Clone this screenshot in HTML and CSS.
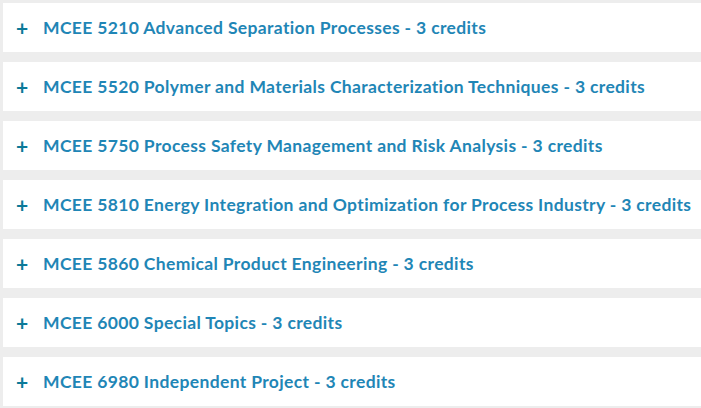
FILE: index.html
```html
<!DOCTYPE html>
<html>
<head>
<meta charset="utf-8">
<link rel="stylesheet" href="styles.css">
</head>
<body>
<div class="list">
  <div class="item"><span class="plus">+</span><span class="title">MCEE 5210 Advanced Separation Processes - 3 credits</span></div>
  <div class="item"><span class="plus">+</span><span class="title">MCEE 5520 Polymer and Materials Characterization Techniques - 3 credits</span></div>
  <div class="item"><span class="plus">+</span><span class="title">MCEE 5750 Process Safety Management and Risk Analysis - 3 credits</span></div>
  <div class="item"><span class="plus">+</span><span class="title">MCEE 5810 Energy Integration and Optimization for Process Industry - 3 credits</span></div>
  <div class="item"><span class="plus">+</span><span class="title">MCEE 5860 Chemical Product Engineering - 3 credits</span></div>
  <div class="item"><span class="plus">+</span><span class="title">MCEE 6000 Special Topics - 3 credits</span></div>
  <div class="item"><span class="plus">+</span><span class="title">MCEE 6980 Independent Project - 3 credits</span></div>
</div>
</body>
</html>
```
FILE: styles.css
```css
html, body {
  margin: 0;
  padding: 0;
  background: #ededed;
}
.list {
  display: flex;
  flex-direction: column;
  gap: 10px;
  padding: 3px 0 0 3px;
}
.item {
  height: 49px;
  background: #ffffff;
  display: flex;
  align-items: center;
  font-family: "Lato", sans-serif;
  font-weight: 700;
  font-size: 17.5px;
  white-space: nowrap;
  overflow: hidden;
}
.plus {
  width: 40px;
  padding-left: 13px;
  box-sizing: border-box;
  color: #0b7a99;
  font-size: 21px;
  font-weight: 700;
}
.title {
  color: #1f86b6;
  letter-spacing: 0.35px;
}
```
